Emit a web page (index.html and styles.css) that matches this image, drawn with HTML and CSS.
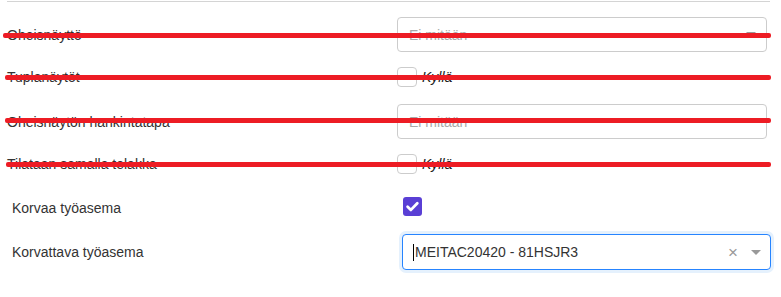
FILE: index.html
```html
<!DOCTYPE html>
<html lang="fi">
<head>
<meta charset="utf-8">
<title>Lomake</title>
<link rel="stylesheet" href="styles.css">
</head>
<body>
<div class="page">
  <div class="section section-old">
    <div class="row row-select">
      <div class="label">Oheisnäyttö</div>
      <div class="select">
        <span class="placeholder">Ei mitään</span>
        <span class="controls"><span class="arrow"></span></span>
      </div>
    </div>
    <div class="row row-check">
      <div class="label">Tuplanäytöt</div>
      <label class="check-field"><span class="box"></span><span class="check-text">Kyllä</span></label>
    </div>
    <div class="row row-select">
      <div class="label">Oheisnäytön hankintatapa</div>
      <div class="select">
        <span class="placeholder">Ei mitään</span>
      </div>
    </div>
    <div class="row row-check">
      <div class="label">Tilataan samalla telakka</div>
      <label class="check-field"><span class="box"></span><span class="check-text">Kyllä</span></label>
    </div>
  </div>
  <div class="section section-new">
    <div class="row row-check">
      <div class="label">Korvaa työasema</div>
      <label class="check-field"><span class="box box-checked"><svg viewBox="0 0 19 19" width="19" height="19"><path d="M4.6 9.8 L7.9 12.9 L14.3 6.3" fill="none" stroke="#fff" stroke-width="2.8" stroke-linecap="round" stroke-linejoin="round"/></svg></span></label>
    </div>
    <div class="row row-select">
      <div class="label">Korvattava työasema</div>
      <div class="select select-focus">
        <span class="value"><span class="caret"></span>MEITAC20420 - 81HSJR3</span>
        <span class="controls controls-focus"><span class="clear">×</span><span class="arrow"></span></span>
      </div>
    </div>
  </div>
  <div class="strikes">
    <span class="strike s1"></span>
    <span class="strike s2"></span>
    <span class="strike s3"></span>
    <span class="strike s4"></span>
  </div>
</div>
</body>
</html>
```
FILE: styles.css
```css
html, body {
  margin: 0;
  padding: 0;
  background: #fff;
}
body {
  font-family: "Liberation Sans", Arial, sans-serif;
  font-size: 14px;
  color: #333;
}
.page {
  position: relative;
  width: 781px;
  height: 297px;
  overflow: hidden;
}
.section-old {
  margin: 1px 0 0 7px;
  width: 763px;
  border-top: 1px solid #d4d4d4;
  padding-top: 15px;
}
.section-new {
  margin: 0 0 0 12px;
  padding-top: 4px;
  width: 759px;
}
.row {
  display: grid;
  grid-template-columns: 390px 370px;
  align-items: center;
}
.section-old .row-select { margin-bottom: 15px; }
.section-old .row-check { margin-bottom: 17px; }
.section-new .row {
  grid-template-columns: 390px 369px;
}
.section-new .row-check { margin-bottom: 16px; }
.section-new .row-check .label { padding-top: 3px; }
.label {
  line-height: 20px;
}
.select {
  box-sizing: border-box;
  height: 35px;
  border: 1px solid #cccccc;
  border-radius: 4px;
  display: flex;
  align-items: center;
  justify-content: space-between;
  padding: 0 10px 0 11px;
  background: #fff;
}
.placeholder {
  color: #a9a9a9;
}
.controls {
  display: flex;
  align-items: center;
  gap: 14px;
}
.controls-focus {
  gap: 13px;
}
.arrow {
  width: 0;
  height: 0;
  border-left: 5px solid transparent;
  border-right: 5px solid transparent;
  border-top: 5px solid #999;
}
.clear {
  color: #999;
  font-size: 17px;
  line-height: 1;
}
.select-focus {
  height: 36px;
  border-color: #2684ff;
  box-shadow: 0 0 0 3px #e5f1fd;
  padding: 0 9px 0 10px;
}
.value {
  color: #333;
  display: flex;
  align-items: center;
}
.caret {
  display: inline-block;
  width: 1px;
  height: 17px;
  background: #000;
  margin-right: 1px;
}
.check-field {
  display: flex;
  align-items: center;
  gap: 5px;
  height: 20px;
}
.box {
  box-sizing: border-box;
  width: 20px;
  height: 20px;
  border: 1px solid #cccccc;
  border-radius: 4px;
  background: #fff;
}
.box-checked {
  width: 19px;
  height: 19px;
  margin-left: 1px;
  border: none;
  border-radius: 3px;
  background: #5a3fd5;
  display: flex;
}
.check-text {
  font-style: italic;
  color: #222;
}
.strikes {
  position: absolute;
  inset: 0;
  pointer-events: none;
}
.strike {
  position: absolute;
  height: 5px;
  background: #ed1c24;
  border-radius: 2px;
}
.s1 { left: 3px; width: 768px; top: 33px; }
.s2 { left: 5px; width: 766px; top: 75px; }
.s3 { left: 5px; width: 766px; top: 118px; }
.s4 { left: 6px; width: 765px; top: 162px; }
```
